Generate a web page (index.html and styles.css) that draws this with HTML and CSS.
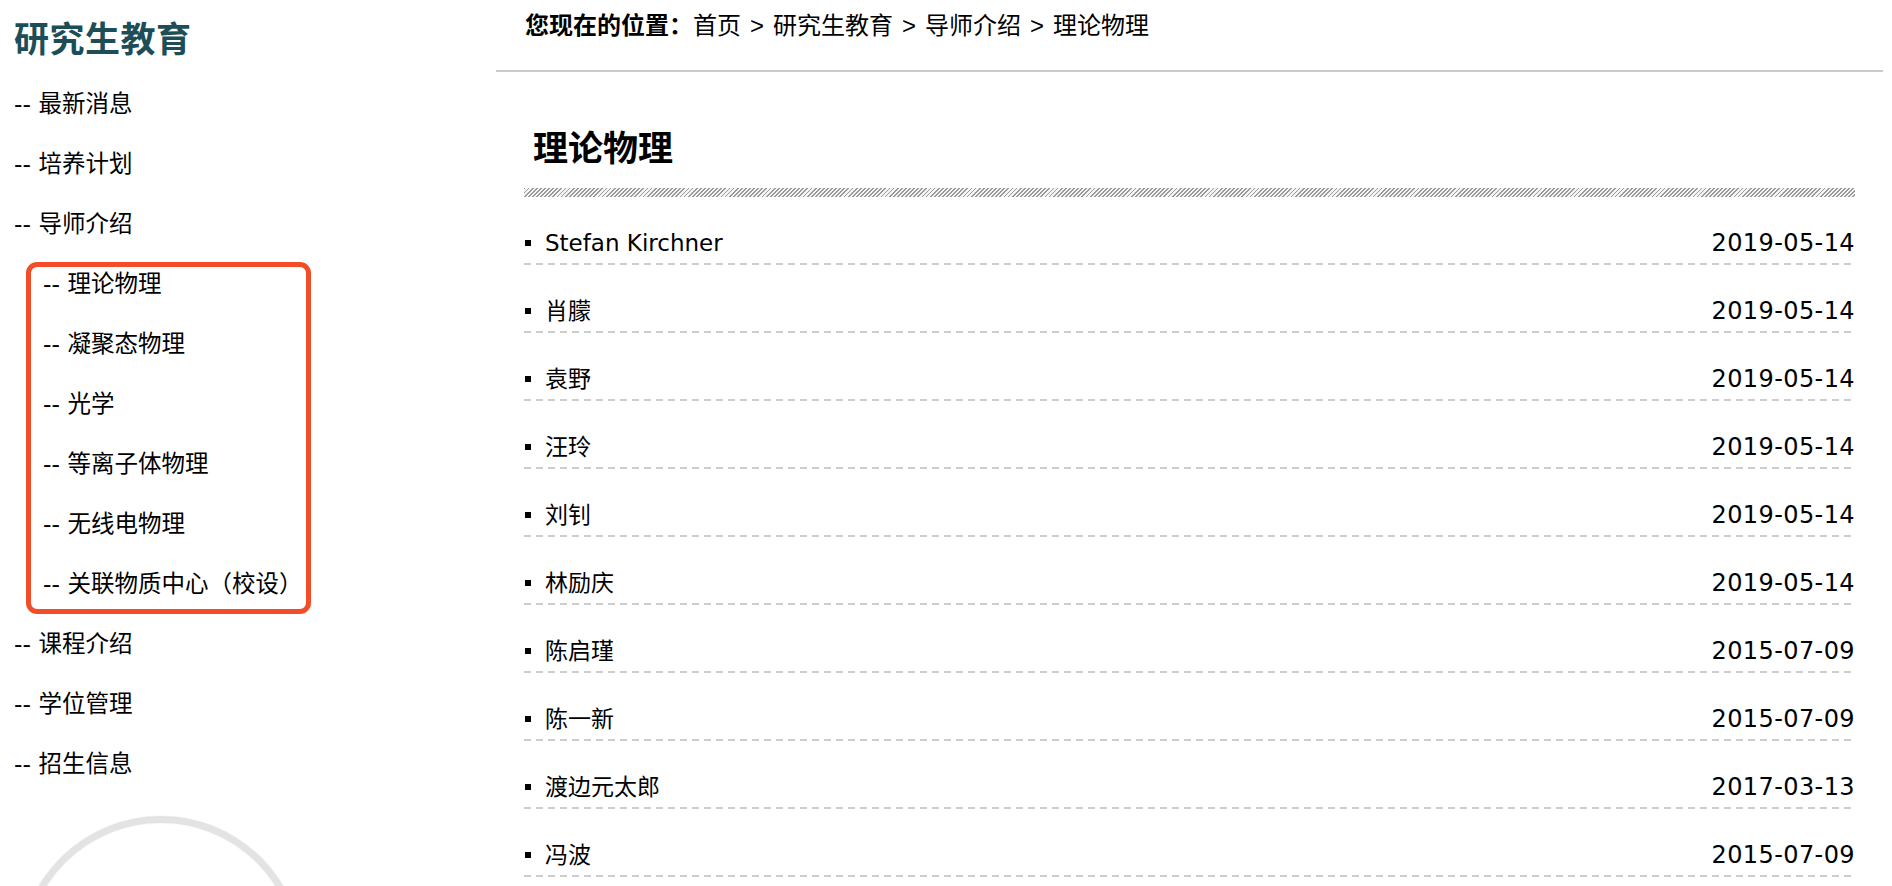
FILE: index.html
```html
<!DOCTYPE html>
<html lang="zh-CN">
<head>
<meta charset="utf-8">
<title>理论物理 - 研究生教育</title>
<link rel="stylesheet" href="styles.css">
</head>
<body>
<div class="page">
  <aside class="sidebar">
    <h2 class="side-title">研究生教育</h2>
    <ul class="side-nav">
      <li><a href="#">-- 最新消息</a></li>
      <li><a href="#">-- 培养计划</a></li>
      <li><a href="#">-- 导师介绍</a>
        <ul class="sub-nav">
          <li><a href="#">-- 理论物理</a></li>
          <li><a href="#">-- 凝聚态物理</a></li>
          <li><a href="#">-- 光学</a></li>
          <li><a href="#">-- 等离子体物理</a></li>
          <li><a href="#">-- 无线电物理</a></li>
          <li><a href="#">-- 关联物质中心（校设）</a></li>
          <span class="highlight-box"></span>
        </ul>
      </li>
      <li><a href="#">-- 课程介绍</a></li>
      <li><a href="#">-- 学位管理</a></li>
      <li><a href="#">-- 招生信息</a></li>
    </ul>
    <div class="side-ring"></div>
  </aside>
  <main class="main">
    <div class="breadcrumb"><span class="crumb-label">您现在的位置：</span>首页<span class="sep">&gt;</span>研究生教育<span class="sep">&gt;</span>导师介绍<span class="sep">&gt;</span>理论物理</div>
    <section class="content">
      <h1 class="page-title">理论物理</h1>
      <div class="hatch"></div>
      <ul class="news-list">
        <li><a href="#"><span class="bullet"></span>Stefan Kirchner</a><span class="date">2019-05-14</span></li>
        <li><a href="#"><span class="bullet"></span>肖朦</a><span class="date">2019-05-14</span></li>
        <li><a href="#"><span class="bullet"></span>袁野</a><span class="date">2019-05-14</span></li>
        <li><a href="#"><span class="bullet"></span>汪玲</a><span class="date">2019-05-14</span></li>
        <li><a href="#"><span class="bullet"></span>刘钊</a><span class="date">2019-05-14</span></li>
        <li><a href="#"><span class="bullet"></span>林励庆</a><span class="date">2019-05-14</span></li>
        <li><a href="#"><span class="bullet"></span>陈启瑾</a><span class="date">2015-07-09</span></li>
        <li><a href="#"><span class="bullet"></span>陈一新</a><span class="date">2015-07-09</span></li>
        <li><a href="#"><span class="bullet"></span>渡边元太郎</a><span class="date">2017-03-13</span></li>
        <li><a href="#"><span class="bullet"></span>冯波</a><span class="date">2015-07-09</span></li>
      </ul>
    </section>
  </main>
</div>
</body>
</html>
```

FILE: styles.css
```css
html, body {
  margin: 0;
  padding: 0;
  background: #fff;
  overflow: hidden;
}
body {
  font-family: "DejaVu Sans", "Noto Sans CJK SC", sans-serif;
  color: #000;
}
a {
  color: inherit;
  text-decoration: none;
}
ul {
  list-style: none;
  margin: 0;
  padding: 0;
}
.page {
  display: flex;
  align-items: flex-start;
  width: 1892px;
}

/* ---------- sidebar ---------- */
.sidebar {
  flex: 0 0 496px;
  box-sizing: border-box;
  padding-left: 14px;
}
.side-title {
  margin: 0;
  height: 74px;
  line-height: 74px;
  font-size: 35px;
  font-weight: 700;
  color: #1d4e57;
  font-family: "Noto Sans CJK SC", sans-serif;
  letter-spacing: 0.5px;
}
.side-nav li {
  font-size: 23.5px;
  line-height: 60px;
}
.sub-nav {
  position: relative;
  padding-left: 29px;
}
.highlight-box {
  position: absolute;
  left: 12px;
  top: 8px;
  width: 285px;
  height: 352px;
  box-sizing: border-box;
  border: 5px solid #f24c28;
  border-radius: 11px;
  pointer-events: none;
}
.side-ring {
  margin: 22px 0 0 5px;
  width: 284px;
  height: 284px;
  box-sizing: border-box;
  border-radius: 50%;
  border: 7px solid #e3e3e3;
  box-shadow: 0 0 2px #efefef, inset 0 0 2px #efefef;
}

/* ---------- main ---------- */
.main {
  flex: 1;
  margin-right: 9px;
}
.breadcrumb {
  box-sizing: border-box;
  height: 72px;
  padding: 0 0 0 29px;
  line-height: 52px;
  font-size: 24px;
  border-bottom: 2px solid #cbcbcb;
  white-space: nowrap;
}
.crumb-label {
  font-weight: 700;
}
.sep {
  font-family: "Liberation Sans", sans-serif;
  padding: 0 9px;
}
.content {
  padding: 0 28px;
}
.page-title {
  margin: 52px 0 0;
  padding-left: 9px;
  font-size: 35px;
  line-height: 50px;
  font-weight: 700;
  font-family: "DejaVu Sans", "Noto Sans CJK SC", sans-serif;
}
.hatch {
  margin-top: 14px;
  height: 9px;
  background: repeating-linear-gradient(135deg, #9a9a9a 0 1.3px, #f4f4f4 1.3px 2.9px);
}
.news-list li {
  display: flex;
  justify-content: space-between;
  align-items: center;
  height: 68px;
  box-sizing: border-box;
  padding: 31px 0 7px;
  line-height: 30px;
  font-size: 23px;
  background: repeating-linear-gradient(90deg, #cdcdcd 0 7px, transparent 7px 12px) left bottom / 100% 2px no-repeat;
}
.news-list a {
  display: flex;
  align-items: center;
}
.bullet {
  width: 6px;
  height: 6px;
  background: #000;
  margin: 0 14px 0 1px;
}
.date {
  font-size: 24px;
  letter-spacing: 0.4px;
}
```
